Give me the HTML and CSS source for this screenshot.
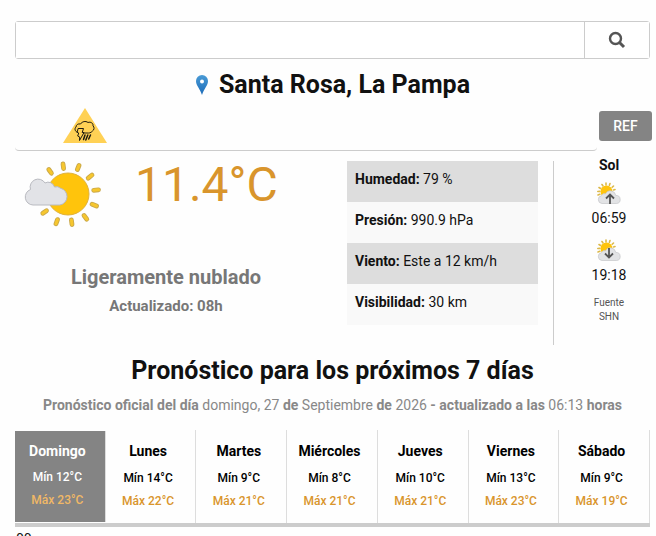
FILE: index.html
```html
<!DOCTYPE html>
<html lang="es">
<head>
  <meta charset="UTF-8">
  <meta name="viewport" content="width=device-width, initial-scale=1.0">
  <title>Santa Rosa, La Pampa - Pronóstico</title>
  <link rel="stylesheet" href="styles.css">
</head>
<body>
  <svg class="sprite" aria-hidden="true">
    <symbol id="sun-cloud" viewBox="0 0 24 24">
      <g stroke="#dcb94a" stroke-width="1.6" stroke-linecap="round">
        <path d="M9 1v2M5 2.500l1 1.500M13 1.500l-.6 1.700M16.500 4l-1.300 1.300M2 5.500l1.600 1M.8 9.500l2-.1M1 13l1.800-.7M18 7.500l-1.500.4"/>
      </g>
      <circle cx="9.500" cy="9.500" r="6" fill="#ffc40c"/>
      <path d="M5 21.500a4 4 0 0 1-.5-7.900 3.200 3.200 0 0 1 4-1.800 5.500 5.500 0 0 1 10.300 1.700 4 4 0 0 1 .7 8z" fill="#e2e3e5" stroke="#c4c5c8" stroke-width=".7"/>
    </symbol>
  </svg>

  <main class="weather">
    <form class="search">
      <input type="text" class="search-input" aria-label="Buscar localidad">
      <button type="button" class="search-button" aria-label="Buscar">
        <svg width="18" height="18" viewBox="0 0 18 18" fill="none" stroke="#555">
          <circle cx="7.500" cy="7.500" r="5.500" stroke-width="2.400"/>
          <path d="M11.500 11.500l4.500 4.500" stroke-width="3"/>
        </svg>
      </button>
    </form>

    <h1 class="city">
      <svg width="14" height="20" viewBox="0 0 14 20">
        <defs>
          <linearGradient id="pin" x1="0" y1="0" x2="0" y2="1">
            <stop offset="0" stop-color="#4a9bd6"/>
            <stop offset="1" stop-color="#1b6bb8"/>
          </linearGradient>
        </defs>
        <path d="M7 0a6 6 0 0 1 6 6c0 4.500-4 7.500-6 14-2-6.500-6-9.500-6-14a6 6 0 0 1 6-6z" fill="url(#pin)"/>
        <circle cx="7" cy="6.500" r="2" fill="#fff"/>
      </svg>
      Santa Rosa, La Pampa
    </h1>

    <div class="alerts">
      <div class="alert-box">
        <svg width="44" height="35" viewBox="0 0 44 35" role="img" aria-label="Alerta amarilla por tormentas">
          <path d="M22 0l22 35H0z" fill="#ffd155"/>
          <g fill="none" stroke="#1e1a10" stroke-linejoin="round" stroke-linecap="round">
            <path d="M14.500 24.500c-2.500-1-3.300-3.700-1.500-5.500.2-2.200 2-3.600 4.500-3 1.500-2.400 5-3.400 7.500-1.500 2.500-1 5.500.7 5 3.300 1.600 1.500 1.300 4.300-.7 5.400-1.500 1.800-3.300 2-5.300 1.800h-3.500"/>
            <path d="M15.500 20.500h5l-1.300 4h1.800l-4.500 8 .2-3.500-2-1 1-3-1.200-.5z"/>
            <path d="M22 27l-1.500 4.500M24.800 27l-2 5M27.500 27l-1.800 4" stroke-width="1.500"/>
          </g>
        </svg>
      </div>
      <button type="button" class="ref-button">REF</button>
    </div>

    <section class="current">
      <div class="now">
        <div class="now-top">
          <svg width="80" height="70" viewBox="0 0 80 70" role="img" aria-label="Ligeramente nublado">
            <defs>
              <path id="rays" d="M39 3l.6 4.500M55 4.500l-1.600 4M68 14l-3.800 3.200M74.500 28.800l-4.800.5M72.500 45l-4.400-1.800M62.800 58.200l-2.800-3.700M48 63.500l-.6-4.500M32 62.800l1.500-4.200M18.800 52.300l3.700-2.600M24.800 8.500l2.600 3.700"/>
            </defs>
            <use href="#rays" stroke="#c9a84a" stroke-width="4.800" stroke-linecap="round"/>
            <use href="#rays" stroke="#f6c62e" stroke-width="3" stroke-linecap="round"/>
            <circle cx="44" cy="33" r="21" fill="#ffc40c" stroke="#dfb13a"/>
            <path d="M9 44a8 8 0 0 1-2.500-15.500 8 8 0 0 1 14.500-6.500 6.500 6.500 0 0 1 9.500 4 6 6 0 0 1 6 1.200 8.600 8.600 0 0 1-.5 16.800z" fill="#e2e3e7" stroke="#b9bac0"/>
          </svg>
          <span class="temperature">11.4°C</span>
        </div>
        <div class="condition">Ligeramente nublado</div>
        <div class="updated">Actualizado: 08h</div>
      </div>

      <ul class="details">
        <li><b>Humedad:</b> 79 %</li>
        <li><b>Presión:</b> 990.9 hPa</li>
        <li><b>Viento:</b> Este a 12 km/h</li>
        <li><b>Visibilidad:</b> 30 km</li>
      </ul>

      <div class="sun">
        <b>Sol</b>
        <svg class="sun-icon" viewBox="0 0 24 24" role="img" aria-label="Salida del sol">
          <use href="#sun-cloud"/>
          <path d="M13 22v-9M9 16.500l4-4 4 4" fill="none" stroke="#555" stroke-width="1.800"/>
        </svg>
        <span class="sun-time">06:59</span>
        <svg class="sun-icon" viewBox="0 0 24 24" role="img" aria-label="Puesta del sol">
          <use href="#sun-cloud"/>
          <path d="M12 9v9M8 14.500l4 4 4-4" fill="none" stroke="#555" stroke-width="1.800"/>
        </svg>
        <span class="sun-time">19:18</span>
        <small class="source">Fuente<br>SHN</small>
      </div>
    </section>

    <h2 class="forecast-title">Pronóstico para los próximos 7 días</h2>
    <p class="forecast-info"><b>Pronóstico oficial del día</b> domingo, 27 <b>de</b> Septiembre <b>de</b> 2026 <b>- actualizado a las</b> 06:13 <b>horas</b></p>

    <div class="days">
      <button type="button" class="day active"><span class="day-name">Domingo</span><span>Mín 12°C</span><span class="max">Máx 23°C</span></button>
      <button type="button" class="day"><span class="day-name">Lunes</span><span>Mín 14°C</span><span class="max">Máx 22°C</span></button>
      <button type="button" class="day"><span class="day-name">Martes</span><span>Mín 9°C</span><span class="max">Máx 21°C</span></button>
      <button type="button" class="day"><span class="day-name">Miércoles</span><span>Mín 8°C</span><span class="max">Máx 21°C</span></button>
      <button type="button" class="day"><span class="day-name">Jueves</span><span>Mín 10°C</span><span class="max">Máx 21°C</span></button>
      <button type="button" class="day"><span class="day-name">Viernes</span><span>Mín 13°C</span><span class="max">Máx 23°C</span></button>
      <button type="button" class="day"><span class="day-name">Sábado</span><span>Mín 9°C</span><span class="max">Máx 19°C</span></button>
    </div>
    <div class="hour">00</div>
  </main>
</body>
</html>
```
FILE: styles.css
```css
* {
  box-sizing: border-box;
}

body {
  margin: 0;
  font-family: Roboto, sans-serif;
  font-size: 14px;
  line-height: 20px;
  color: #111;
  background: #fefefe;
}

button, input {
  font-family: inherit;
}

b {
  font-weight: 700;
}

.sprite {
  display: none;
}

.weather {
  padding: 21px 6px 0 15px;
}

.search {
  display: flex;
  height: 38px;
  border: 1px solid #ccc;
  border-radius: 3px;
  margin-bottom: 10px;
}

.search-input {
  flex: 1;
  min-width: 0;
  border: 0;
  padding: 0 12px;
  background: #fff;
}

.search-button {
  width: 65px;
  display: flex;
  align-items: center;
  justify-content: center;
  border: 0;
  border-left: 1px solid #ccc;
  background: #fff;
  cursor: pointer;
}

.city {
  display: flex;
  align-items: center;
  justify-content: center;
  gap: 10px;
  margin: 0 0 8px;
  font-size: 25px;
  line-height: 31px;
  font-weight: 700;
}

.alerts {
  display: flex;
  align-items: flex-start;
  gap: 2px;
  margin-right: -2px;
}

.alert-box {
  flex: 1;
  height: 43px;
  padding-left: 48px;
  border-bottom: 1px solid #ccc;
  border-radius: 0 0 4px 4px;
}

.ref-button {
  height: 30px;
  width: 53px;
  margin-top: 3px;
  padding: 0;
  border: 0;
  border-radius: 3px;
  background: #848484;
  color: #fff;
  font-size: 14px;
  font-weight: 500;
  cursor: pointer;
}

.current {
  display: flex;
  align-items: flex-start;
  padding-top: 10px;
  margin-bottom: 10px;
}

.now {
  flex: 1;
  text-align: center;
  color: #777;
}

.now-top {
  display: flex;
  gap: 31px;
  padding-left: 9px;
  margin-bottom: 34px;
}

.temperature {
  font-size: 48px;
  line-height: 48px;
  color: #d9952c;
}

.condition {
  font-size: 20px;
  line-height: 24px;
  font-weight: 700;
  margin: 0 30px 7px 0;
}

.updated {
  margin-right: 30px;
  font-size: 15px;
  font-weight: 700;
}

.details {
  width: 191px;
  margin: 0 15px 0 0;
  padding: 0;
  list-style: none;
}

.details li {
  height: 41px;
  padding: 8px;
  background: #f9f9f9;
}

.details li:nth-child(odd) {
  background: #ddd;
}

.sun {
  display: flex;
  flex-direction: column;
  align-items: center;
  width: 97px;
  height: 184px;
  padding-left: 14px;
  border-left: 1px solid #ccc;
}

.sun b {
  line-height: 8px;
  margin-bottom: 13px;
}

.sun-icon {
  width: 24px;
  height: 24px;
}

.sun-time {
  line-height: 25px;
  margin-bottom: 8px;
}

.source {
  font-size: 10px;
  line-height: 14px;
  text-align: center;
  color: #555;
}

.forecast-title {
  margin: 0;
  font-size: 25px;
  line-height: 32px;
  font-weight: 700;
  text-align: center;
}

.forecast-info {
  margin: 8px 0 15px;
  text-align: center;
  color: #888;
}

.days {
  display: grid;
  grid-template-columns: repeat(7, 1fr);
  border-bottom: 4px solid #ccc;
}

.day {
  display: flex;
  flex-direction: column;
  align-items: center;
  height: 93px;
  padding: 11px 5px 0 0;
  border: 0;
  border-right: 1px solid #ddd;
  background: none;
  color: #000;
  font-size: 12px;
  line-height: 23px;
  font-weight: 500;
  cursor: pointer;
}

.day-name {
  font-size: 14px;
  line-height: 20px;
  font-weight: 700;
  margin-bottom: 6px;
}

.day.active {
  height: 91px;
  margin: 1px 0;
  padding-top: 10px;
  background: #848484;
  color: #fff;
}

.day.active .day-name {
  margin-bottom: 5px;
}

.max {
  color: #d9952c;
}

.day.active .max {
  color: #f0b866;
}

.hour {
  padding: 2px 0 0 1px;
}
```
